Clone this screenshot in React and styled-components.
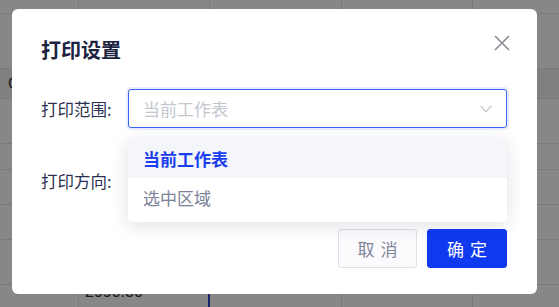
import React from 'react';
import styled, { createGlobalStyle } from 'styled-components';

const GlobalStyle = createGlobalStyle`
  html, body {
    margin: 0;
    padding: 0;
    width: 559px;
    height: 307px;
    overflow: hidden;
    background: #fff;
    font-family: 'Noto Sans CJK SC', 'Noto Sans', sans-serif;
  }
`;

const Page = styled.div`
  position: relative;
  width: 559px;
  height: 307px;
  overflow: hidden;
`;

const Sheet = styled.div`
  display: flex;
  flex-direction: column;
  width: 100%;
  height: 100%;
`;

const SheetRow = styled.div`
  display: flex;
  height: ${(p) => p.h}px;
  flex-shrink: 0;
  border-bottom: 1px solid #e4e6ea;
  background: ${(p) => (p.head ? '#f1f2f4' : '#fff')};
  box-sizing: border-box;
`;

const Cell = styled.div`
  width: ${(p) => p.w}px;
  flex-shrink: 0;
  box-sizing: border-box;
  border-right: ${(p) => (p.sel ? '2px solid #2d44c8' : '1px solid #e4e6ea')};
  font-family: 'Liberation Sans', Arial, sans-serif;
  font-size: 16px;
  line-height: 14px;
  color: #333;
  display: flex;
  align-items: ${(p) => (p.head ? 'center' : 'flex-start')};
  padding-left: ${(p) => p.pad}px;
`;

const Overlay = styled.div`
  position: absolute;
  inset: 0;
  background: rgba(0, 0, 0, 0.47);
`;

const Modal = styled.div`
  position: absolute;
  left: 12px;
  top: 9px;
  width: 525px;
  height: 285px;
  box-sizing: border-box;
  background: #fff;
  border-radius: 6px;
  padding: 29px 30px 26px 29px;
  display: flex;
  flex-direction: column;
`;

const Title = styled.div`
  font-size: 20px;
  line-height: 24px;
  font-weight: 700;
  color: #1b2341;
  margin-bottom: 27px;
`;

const Close = styled.button`
  position: absolute;
  top: 26px;
  right: 27px;
  width: 16px;
  height: 16px;
  padding: 0;
  border: none;
  background: none;
  cursor: pointer;
  display: flex;
`;

const FormRow = styled.div`
  display: flex;
  align-items: center;
  height: 39px;
  margin-bottom: ${(p) => p.gap || 0}px;
  position: relative;
`;

const Label = styled.div`
  width: 87px;
  flex-shrink: 0;
  font-size: 16.5px;
  color: #2a3150;
  white-space: nowrap;
`;

const SelectBox = styled.div`
  position: relative;
  width: 379px;
  height: 39px;
  box-sizing: border-box;
  border: 1px solid #3a66f2;
  border-radius: 3px;
  box-shadow: 0 0 0 2px #e6ecfd;
  display: flex;
  align-items: center;
  justify-content: space-between;
  padding: 0 14px 0 14px;
  background: #fff;
`;

const Placeholder = styled.span`
  font-size: 17px;
  color: #c3c6cf;
`;

const Dropdown = styled.div`
  position: absolute;
  left: -1px;
  top: 49px;
  width: 379px;
  background: #fff;
  border-radius: 4px;
  box-shadow: 0 4px 18px rgba(30, 40, 70, 0.14);
  padding-bottom: 5px;
  z-index: 2;
`;

const Option = styled.div`
  height: 39px;
  display: flex;
  align-items: center;
  padding-left: 15px;
  font-size: 17px;
  font-weight: ${(p) => (p.active ? 700 : 400)};
  color: ${(p) => (p.active ? '#1a3ef0' : '#7b8299')};
  background: ${(p) => (p.active ? '#f4f6fa' : '#fff')};
`;

const Footer = styled.div`
  display: flex;
  justify-content: flex-end;
  gap: 10px;
  margin-top: auto;
`;

const Button = styled.button`
  width: ${(p) => (p.primary ? 80 : 79)}px;
  height: 39px;
  box-sizing: border-box;
  border-radius: 3px;
  border: 1px solid ${(p) => (p.primary ? '#0f3af0' : '#dfe1e8')};
  background: ${(p) => (p.primary ? '#0f3af0' : '#fbfbfd')};
  color: ${(p) => (p.primary ? '#fff' : '#7e8599')};
  font-family: 'Noto Sans CJK SC', sans-serif;
  font-size: 17px;
  letter-spacing: 6px;
  text-indent: 6px;
  cursor: pointer;
`;

const cols = [79, 131, 132, 131, 131];
const rows = [
  { h: 14 },
  { h: 55 },
  { h: 30, head: true },
  { h: 45 },
  { h: 26 },
  { h: 35 },
  { h: 35 },
  { h: 45 },
  { h: 30, text: '2990.30' },
];

function headLabel(j) {
  if (j === 0) return { t: 'C', pad: 8 };
  if (j === 4) return { t: 'G', pad: 44 };
  return { t: '', pad: 0 };
}

function App() {
  return (
    <Page>
      <GlobalStyle />
      <Sheet>
        {rows.map((r, i) => (
          <SheetRow key={i} h={r.h} head={r.head}>
            {cols.map((w, j) => {
              const hl = headLabel(j);
              return (
                <Cell
                  key={j}
                  w={w}
                  head={r.head}
                  sel={j === 1 && i > 5}
                  pad={r.head ? hl.pad : 6}
                >
                  {r.head ? hl.t : ''}
                  {r.text && j === 1 ? r.text : ''}
                </Cell>
              );
            })}
          </SheetRow>
        ))}
      </Sheet>
      <Overlay />
      <Modal>
        <Title>打印设置</Title>
        <Close aria-label="close">
          <svg width="16" height="16" viewBox="0 0 16 16">
            <path d="M1 1 L15 15 M15 1 L1 15" stroke="#8a8d95" strokeWidth="1.6" fill="none" />
          </svg>
        </Close>
        <FormRow gap={33}>
          <Label>打印范围:</Label>
          <SelectBox>
            <Placeholder>当前工作表</Placeholder>
            <svg width="12" height="8" viewBox="0 0 12 8">
              <path d="M0.5 0.8 L6 6.8 L11.5 0.8" stroke="#c6c8ce" strokeWidth="1.3" fill="none" />
            </svg>
            <Dropdown>
              <Option active>当前工作表</Option>
              <Option>选中区域</Option>
            </Dropdown>
          </SelectBox>
        </FormRow>
        <FormRow>
          <Label>打印方向:</Label>
        </FormRow>
        <Footer>
          <Button>取消</Button>
          <Button primary>确定</Button>
        </Footer>
      </Modal>
    </Page>
  );
}

export default App;
